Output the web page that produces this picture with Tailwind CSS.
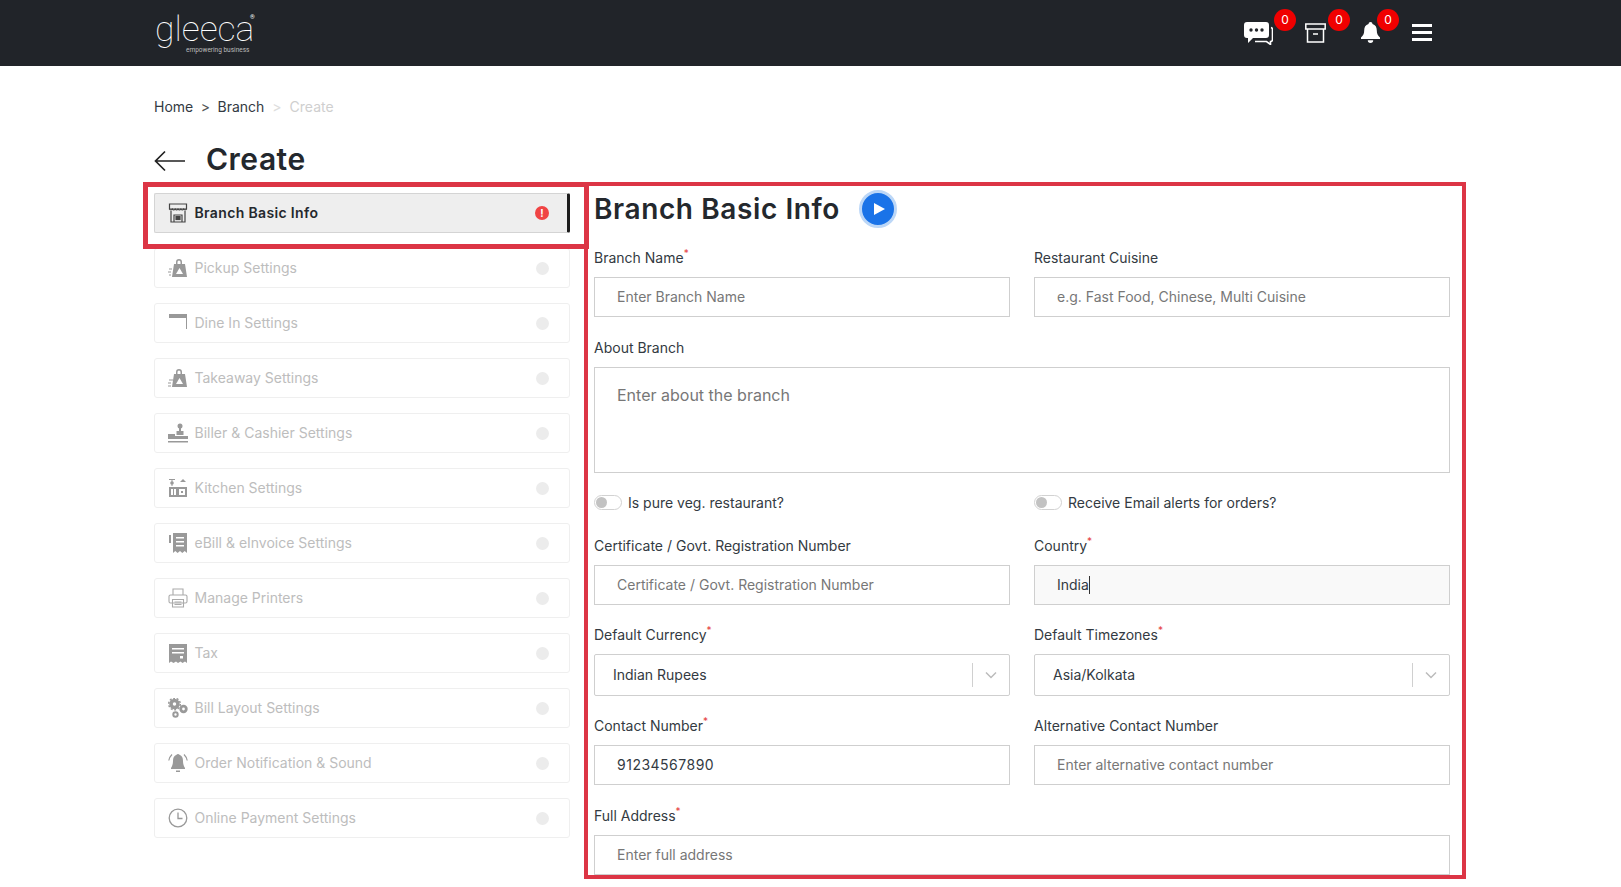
<!DOCTYPE html>
<html lang="en">
<head>
  <meta charset="UTF-8" />
  <title>Create Branch</title>
  <script src="https://cdn.jsdelivr.net/npm/@tailwindcss/browser@4"></script>
</head>
<body class="bg-white text-[#333a42] font-['Inter',sans-serif] overflow-hidden">
  <!-- Header -->
  <header class="h-[66px] bg-[#212429] flex items-center justify-between pl-[155px] pr-[189px]">
    <div class="relative w-[100px] h-[52px] text-white font-['Roboto',sans-serif]">
      <span class="absolute left-0 top-[6px] text-[35.500px] leading-[33px] font-thin">gleeca</span>
      <span class="absolute left-[95px] top-[6px] text-[6px] leading-[8px]">®</span>
      <span class="absolute left-[31px] top-[39px] text-[6.500px] leading-[9px] text-[#bdbdbd] whitespace-nowrap">empowering business</span>
    </div>
    <div class="flex items-center h-full -mt-[1px]">
      <div class="relative w-[61px] h-full flex items-center">
        <svg class="w-[29px] h-[24px]" viewBox="0 0 29 24"><path d="M3 1h19a3 3 0 0 1 3 3v10a3 3 0 0 1-3 3H9l-5 5v-5H3a3 3 0 0 1-3-3V4a3 3 0 0 1 3-3z" fill="#fff"/><path d="M27 6.500a2 2 0 0 1 1.500 2v10a2 2 0 0 1-2 2v3l-4-3H11" fill="none" stroke="#fff" stroke-width="1.600"/><circle cx="7" cy="9" r="1.700" fill="#212429"/><circle cx="12.500" cy="9" r="1.700" fill="#212429"/><circle cx="18" cy="9" r="1.700" fill="#212429"/></svg>
        <span class="absolute left-[30px] top-[9px] w-[22px] h-[22px] rounded-full bg-[#f00000] text-white text-[12px] leading-[22px] text-center">0</span>
      </div>
      <div class="relative w-[56px] h-full flex items-center">
        <svg class="w-[21px] h-[20px]" viewBox="0 0 21 20" fill="none" stroke="#fff" stroke-width="1.500"><rect x="0.800" y="1" width="19.400" height="5"/><path d="M2.500 6v13h16V6M8 11h5"/></svg>
        <span class="absolute left-[23px] top-[9px] w-[22px] h-[22px] rounded-full bg-[#f00000] text-white text-[12px] leading-[22px] text-center">0</span>
      </div>
      <div class="relative w-[53px] h-full flex items-center">
        <svg class="w-[19px] h-[21px]" viewBox="0 0 19 21" fill="#fff"><path d="M9.500 0a2 2 0 0 1 2 2c3 .800 4.300 3.300 4.300 6.500 0 3.500 1 5 3.200 7v1.500H0v-1.500c2.200-2 3.200-3.500 3.200-7 0-3.200 1.300-5.700 4.300-6.500a2 2 0 0 1 2-2z"/><path d="M6.800 18.300h5.400a2.700 2.700 0 0 1-5.400 0z"/></svg>
        <span class="absolute left-[16px] top-[9px] w-[22px] h-[22px] rounded-full bg-[#f00000] text-white text-[12px] leading-[22px] text-center">0</span>
      </div>
      <div class="w-[20px] flex flex-col gap-[4px] -ml-[2px]">
        <span class="h-[3px] bg-white"></span>
        <span class="h-[3px] bg-white"></span>
        <span class="h-[3px] bg-white"></span>
      </div>
    </div>
  </header>

  <main class="pl-[154px]">
    <!-- Breadcrumb -->
    <nav class="mt-[31px] h-5 flex items-center text-[14px] leading-5">
      <span>Home</span>
      <span class="mx-[7.500px] text-[#555]">&gt;</span>
      <span>Branch</span>
      <span class="mx-[8px] text-[#ddd]">&gt;</span>
      <span class="text-[#cfcfcf]">Create</span>
    </nav>

    <!-- Page title -->
    <div class="mt-[24px] h-9 flex items-center">
      <svg class="w-[31px] h-[22px] mt-[4px]" viewBox="0 0 31 22" fill="none" stroke="#222" stroke-width="1.700"><path d="M31 11H1.500M11 1.500 1.500 11l9.500 9.500"/></svg>
      <h1 class="ml-[21px] text-[30px] leading-9 font-semibold tracking-[0.5px] text-[#24282d]">Create</h1>
    </div>

    <div class="mt-[5px] flex items-start">
      <!-- Sidebar -->
      <aside class="relative w-[416px] pt-[11px] flex flex-col gap-[15px] shrink-0">
        <div class="absolute -left-[11px] top-0 w-[446px] h-[67px] border-[5px] border-[#dc3545] pointer-events-none"></div>

        <a class="h-10 flex items-center pl-[13px] pr-[18px] bg-[#eeeeee] border border-[#d4d4d4] border-r-[3px] border-r-[#1c1c1c] rounded-[2px] text-[14px] font-semibold tracking-[0.35px] text-[#24282d]">
          <svg class="w-5 h-5 mr-[6.500px]" viewBox="0 0 20 20" fill="none" stroke="#444" stroke-width="1.200"><path d="M1.500 1h17v5h-17z"/><path d="M1.500 6q1.400 2 2.800 0q1.400 2 2.900 0q1.400 2 2.800 0q1.400 2 2.900 0q1.400 2 2.800 0q1.400 2 2.800 0"/><path d="M3 8v11h14V8"/><path d="M6 19v-7h8v7" /><rect x="8" y="13.500" width="4" height="3" fill="#444"/></svg>
          <span class="flex-1 pb-[1px]">Branch Basic Info</span>
          <span class="w-[14px] h-[14px] rounded-full bg-[#f04444] text-white text-[10px] leading-[14px] text-center font-bold">!</span>
        </a>

        <a class="h-10 flex items-center pl-[13px] pr-[20.500px] border border-[#efefef] rounded-[3px] text-[14px] text-[#bdbdbd]">
          <svg class="w-5 h-5 mr-[6.500px]" viewBox="0 0 20 20" fill="#999"><path d="M8 6V4a3 3 0 0 1 6 0v2h-1.500V4a1.500 1.500 0 0 0-3 0v2z"/><path d="M6 6h11l2 13H4z"/><path d="M11.500 10 8 16h7z" fill="#fff"/><path d="M1 11h3M0 14h3M1 17h2" stroke="#999"/></svg>
          <span class="flex-1 pb-[2px]">Pickup Settings</span>
          <span class="w-[13px] h-[13px] rounded-full bg-[#ececec]"></span>
        </a>

        <a class="h-10 flex items-center pl-[13px] pr-[20.500px] border border-[#efefef] rounded-[3px] text-[14px] text-[#bdbdbd]">
          <svg class="w-5 h-5 mr-[6.500px]" viewBox="0 0 20 20" fill="#999"><path d="M1 1h18v4H1z"/><path d="M18 5h1v11h-1z"/></svg>
          <span class="flex-1 pb-[2px]">Dine In Settings</span>
          <span class="w-[13px] h-[13px] rounded-full bg-[#ececec]"></span>
        </a>

        <a class="h-10 flex items-center pl-[13px] pr-[20.500px] border border-[#efefef] rounded-[3px] text-[14px] text-[#bdbdbd]">
          <svg class="w-5 h-5 mr-[6.500px]" viewBox="0 0 20 20" fill="#999"><path d="M8 6V4a3 3 0 0 1 6 0v2h-1.500V4a1.500 1.500 0 0 0-3 0v2z"/><path d="M6 6h11l2 13H4z"/><path d="M11.500 10 8 16h7z" fill="#fff"/><path d="M1 12h4M0 15h3M0 18h3" stroke="#999"/></svg>
          <span class="flex-1 pb-[2px]">Takeaway Settings</span>
          <span class="w-[13px] h-[13px] rounded-full bg-[#ececec]"></span>
        </a>

        <a class="h-10 flex items-center pl-[13px] pr-[20.500px] border border-[#efefef] rounded-[3px] text-[14px] text-[#bdbdbd]">
          <svg class="w-5 h-5 mr-[6.500px]" viewBox="0 0 20 20" fill="#999"><circle cx="12" cy="3" r="2.500"/><path d="M11 5h2v3h2.500v4h-7V8H11z"/><path d="M0 11h7v2h13v3H0z"/><path d="M0 18h20v1.500H0z"/></svg>
          <span class="flex-1 pb-[2px]">Biller &amp; Cashier Settings</span>
          <span class="w-[13px] h-[13px] rounded-full bg-[#ececec]"></span>
        </a>

        <a class="h-10 flex items-center pl-[13px] pr-[20.500px] border border-[#efefef] rounded-[3px] text-[14px] text-[#bdbdbd]">
          <svg class="w-5 h-5 mr-[6.500px]" viewBox="0 0 20 20" fill="#999"><path d="M1 1h6v1H4.500v6h-1V2H1z"/><circle cx="4" cy="5" r="1.800"/><path d="M12 4l3-3 3 3z"/><path d="M1 9h18v10H1z"/><path d="M3 11h5v6H3zM11 11h6v6h-6z" fill="#fff"/><path d="M5 11h1v6H5zM13 13h2v2h-2z"/></svg>
          <span class="flex-1 pb-[2px]">Kitchen Settings</span>
          <span class="w-[13px] h-[13px] rounded-full bg-[#ececec]"></span>
        </a>

        <a class="h-10 flex items-center pl-[13px] pr-[20.500px] border border-[#efefef] rounded-[3px] text-[14px] text-[#bdbdbd]">
          <svg class="w-5 h-5 mr-[6.500px]" viewBox="0 0 20 20" fill="#999"><path d="M1 2h2v8H1z"/><path d="M5 0h14v20l-2.300-2-2.400 2-2.300-2-2.400 2-2.300-2L5 20z"/><path d="M8 4h8v1.500H8zM8 8h8v1.500H8zM8 12h8v1.500H8z" fill="#fff"/></svg>
          <span class="flex-1 pb-[2px]">eBill &amp; eInvoice Settings</span>
          <span class="w-[13px] h-[13px] rounded-full bg-[#ececec]"></span>
        </a>

        <a class="h-10 flex items-center pl-[13px] pr-[20.500px] border border-[#efefef] rounded-[3px] text-[14px] text-[#bdbdbd]">
          <svg class="w-5 h-5 mr-[6.500px]" viewBox="0 0 20 20" fill="none" stroke="#aaa" stroke-width="1.100"><path d="M5 7V1h10v6"/><rect x="1" y="7" width="18" height="8" rx="1.500"/><path d="M4.500 11.500h11V19h-11zM6.500 14h7M6.500 16.500h7"/></svg>
          <span class="flex-1 pb-[2px]">Manage Printers</span>
          <span class="w-[13px] h-[13px] rounded-full bg-[#ececec]"></span>
        </a>

        <a class="h-10 flex items-center pl-[13px] pr-[20.500px] border border-[#efefef] rounded-[3px] text-[14px] text-[#bdbdbd]">
          <svg class="w-5 h-5 mr-[6.500px]" viewBox="0 0 20 20" fill="#999"><path d="M1 1h18v19l-2-1.500-2.500 1.500-2-1.500-2.500 1.500-2-1.500-2.500 1.500L3 18.500 1 20z"/><path d="M4 5h12v1.500H4zM4 9h12v1.500H4zM12 13h3v2.500h-3z" fill="#fff"/></svg>
          <span class="flex-1 pb-[2px]">Tax</span>
          <span class="w-[13px] h-[13px] rounded-full bg-[#ececec]"></span>
        </a>

        <a class="h-10 flex items-center pl-[13px] pr-[20.500px] border border-[#efefef] rounded-[3px] text-[14px] text-[#bdbdbd]">
          <svg class="w-5 h-5 mr-[6.500px]" viewBox="0 0 20 20" fill="none" stroke="#999"><circle cx="6.500" cy="6" r="3.500" stroke-width="3.500"/><circle cx="6.500" cy="6" r="5.800" stroke-width="1.500" stroke-dasharray="2 1.600"/><circle cx="15.500" cy="11" r="2.800" stroke-width="2.800"/><circle cx="7.500" cy="16.500" r="2.200" stroke-width="2"/></svg>
          <span class="flex-1 pb-[2px]">Bill Layout Settings</span>
          <span class="w-[13px] h-[13px] rounded-full bg-[#ececec]"></span>
        </a>

        <a class="h-10 flex items-center pl-[13px] pr-[20.500px] border border-[#efefef] rounded-[3px] text-[14px] text-[#bdbdbd]">
          <svg class="w-5 h-5 mr-[6.500px]" viewBox="0 0 20 20" fill="#999"><path d="M10 1a2 2 0 0 1 1.500.800C14 2.800 15 5 15 8c0 3 .800 5 2 7v1H3v-1c1.200-2 2-4 2-7 0-3 1-5.200 3.500-6.200A2 2 0 0 1 10 1z"/><path d="M8 17.500h4V19H8z"/><path d="M4 1.500C2 3.500 1 5.500.800 7.500M16 1.500c2 2 3 4 3.200 6" fill="none" stroke="#999" stroke-width="1.200"/></svg>
          <span class="flex-1 pb-[2px]">Order Notification &amp; Sound</span>
          <span class="w-[13px] h-[13px] rounded-full bg-[#ececec]"></span>
        </a>

        <a class="h-10 flex items-center pl-[13px] pr-[20.500px] border border-[#efefef] rounded-[3px] text-[14px] text-[#bdbdbd]">
          <svg class="w-5 h-5 mr-[6.500px]" viewBox="0 0 20 20" fill="none" stroke="#999" stroke-width="1.300"><circle cx="10" cy="10" r="8.800"/><path d="M10 4.500V10.500H14.500"/></svg>
          <span class="flex-1 pb-[2px]">Online Payment Settings</span>
          <span class="w-[13px] h-[13px] rounded-full bg-[#ececec]"></span>
        </a>
      </aside>

      <!-- Form panel -->
      <section class="ml-[14px] w-[882px] h-[697px] border-[4px] border-[#dc3545] overflow-hidden pl-[6px] pr-[12px] pt-[5px] text-[14px]">
        <div class="h-9 flex items-center">
          <h2 class="text-[28px] leading-9 font-semibold tracking-[0.6px] text-[#24282d]">Branch Basic Info</h2>
          <span class="ml-[19px] w-[38px] h-[38px] rounded-full bg-[#1a73e8] border-[3px] border-[#bcd7f7] flex items-center justify-center">
            <svg class="w-[14px] h-[14px] ml-[2px]" viewBox="0 0 14 14" fill="#fff"><path d="M2 1l11 6-11 6z"/></svg>
          </span>
        </div>

        <div class="mt-[21px] grid grid-cols-2 gap-x-[24px]">
          <div>
            <label class="block h-5 leading-5 mb-[9px]">Branch Name<sup class="text-[#e53e3e] text-[10px] top-[-6px]">*</sup></label>
            <input class="block w-full h-10 pl-[22px] pb-[2px] border border-[#cfcfcf] outline-none placeholder:text-[#777]" placeholder="Enter Branch Name" />
          </div>
          <div>
            <label class="block h-5 leading-5 mb-[9px]">Restaurant Cuisine</label>
            <input class="block w-full h-10 pl-[22px] pb-[2px] border border-[#cfcfcf] outline-none placeholder:text-[#777]" placeholder="e.g. Fast Food, Chinese, Multi Cuisine" />
          </div>
        </div>

        <div class="mt-[21px]">
          <label class="block h-5 leading-5 mb-[9px]">About Branch</label>
          <textarea class="block w-full h-[106px] pl-[22px] pt-[15px] text-[16px] border border-[#cfcfcf] outline-none resize-none placeholder:text-[#777]" placeholder="Enter about the branch"></textarea>
        </div>

        <div class="mt-[19px] grid grid-cols-2 gap-x-[24px]">
          <div class="h-5 flex items-center">
            <span class="relative w-[28px] h-[15px] rounded-full border border-[#d2d2d2] mr-[6px]"><span class="absolute left-[1px] top-[1px] w-[11px] h-[11px] rounded-full bg-[#c2c2c2]"></span></span>
            <span>Is pure veg. restaurant?</span>
          </div>
          <div class="h-5 flex items-center">
            <span class="relative w-[28px] h-[15px] rounded-full border border-[#d2d2d2] mr-[6px]"><span class="absolute left-[1px] top-[1px] w-[11px] h-[11px] rounded-full bg-[#c2c2c2]"></span></span>
            <span>Receive Email alerts for orders?</span>
          </div>
        </div>

        <div class="mt-[24px] grid grid-cols-2 gap-x-[24px]">
          <div>
            <label class="block h-5 leading-5 mb-[9px]">Certificate / Govt. Registration Number</label>
            <input class="block w-full h-10 pl-[22px] pb-[2px] border border-[#cfcfcf] outline-none placeholder:text-[#777]" placeholder="Certificate / Govt. Registration Number" />
          </div>
          <div>
            <label class="block h-5 leading-5 mb-[9px]">Country<sup class="text-[#e53e3e] text-[10px] top-[-6px]">*</sup></label>
            <div class="h-10 pl-[22px] flex items-center bg-[#f9f9f9] border border-[#cfcfcf]"><span class="border-r border-[#333] leading-[18px]">India</span></div>
          </div>
        </div>

        <div class="mt-[20px] grid grid-cols-2 gap-x-[24px]">
          <div>
            <label class="block h-5 leading-5 mb-[9px]">Default Currency<sup class="text-[#e53e3e] text-[10px] top-[-6px]">*</sup></label>
            <div class="h-[42px] pl-[18px] flex items-center border border-[#cfcfcf] rounded-[2px]">
              <span class="flex-1 pb-[2px]">Indian Rupees</span>
              <span class="w-px h-[24px] bg-[#d0d0d0]"></span>
              <svg class="w-[36px] h-[10px]" viewBox="0 0 36 10" fill="none" stroke="#bbb" stroke-width="1.500"><path d="M13 2.500l5 5 5-5"/></svg>
            </div>
          </div>
          <div>
            <label class="block h-5 leading-5 mb-[9px]">Default Timezones<sup class="text-[#e53e3e] text-[10px] top-[-6px]">*</sup></label>
            <div class="h-[42px] pl-[18px] flex items-center border border-[#cfcfcf] rounded-[2px]">
              <span class="flex-1 pb-[2px]">Asia/Kolkata</span>
              <span class="w-px h-[24px] bg-[#d0d0d0]"></span>
              <svg class="w-[36px] h-[10px]" viewBox="0 0 36 10" fill="none" stroke="#bbb" stroke-width="1.500"><path d="M13 2.500l5 5 5-5"/></svg>
            </div>
          </div>
        </div>

        <div class="mt-[20px] grid grid-cols-2 gap-x-[24px]">
          <div>
            <label class="block h-5 leading-5 mb-[9px]">Contact Number<sup class="text-[#e53e3e] text-[10px] top-[-6px]">*</sup></label>
            <input class="block w-full h-10 pl-[22px] pb-[2px] border border-[#cfcfcf] outline-none tracking-[0.5px]" value="91234567890" />
          </div>
          <div>
            <label class="block h-5 leading-5 mb-[9px]">Alternative Contact Number</label>
            <input class="block w-full h-10 pl-[22px] pb-[2px] border border-[#cfcfcf] outline-none placeholder:text-[#777]" placeholder="Enter alternative contact number" />
          </div>
        </div>

        <div class="mt-[21px]">
          <label class="block h-5 leading-5 mb-[9px]">Full Address<sup class="text-[#e53e3e] text-[10px] top-[-6px]">*</sup></label>
          <input class="block w-full h-10 pl-[22px] pb-[2px] border border-[#cfcfcf] outline-none placeholder:text-[#777]" placeholder="Enter full address" />
        </div>
      </section>
    </div>
  </main>
</body>
</html>
